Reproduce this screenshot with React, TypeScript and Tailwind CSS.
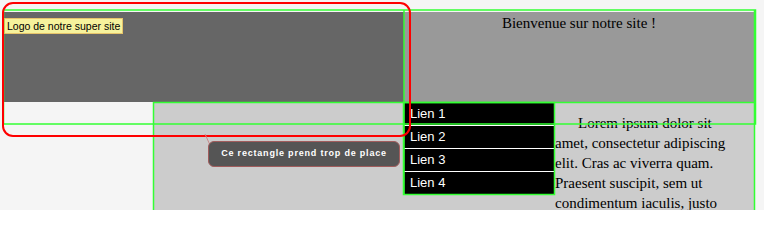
import React from "react";

const serif = { fontFamily: '"Liberation Serif", "Times New Roman", serif' };

export default function App() {
  return (
    <div className="relative w-[764px] h-[210px] overflow-hidden bg-[#f5f5f5]">
      {/* page */}
      <div className="pt-[12px] pl-[4px]">
        <div className="w-[750px]">
          {/* header */}
          <div className="flex h-[90px]">
            <div className="w-[400px] bg-[#666666] relative">
              <div className="inline-block h-[16px] px-[2px] bg-[#f6f29c] border border-[#e6c46a] text-black text-[10.5px] leading-[14px] font-['Liberation_Sans',Arial,sans-serif] whitespace-nowrap">
                Logo de notre super site
              </div>
            </div>
            <div
              className="w-[350px] bg-[#999999] text-center text-black text-[15px] leading-[19px] pt-[2px]"
              style={serif}
            >
              Bienvenue sur notre site !
            </div>
          </div>
          {/* body */}
          <div className="flex h-[120px]">
            <div className="w-[149px]" />
            <div className="w-[601px] bg-[#cccccc] flex">
              <div className="w-[251px]" />
              <ul className="w-[150px] pt-[1px] self-start font-['Liberation_Sans',Arial,sans-serif] text-white text-[13px]">
                <li className="h-[23px] leading-[22px] pl-[6px] bg-black border-b border-white">Lien 1</li>
                <li className="h-[23px] leading-[22px] pl-[6px] bg-black border-b border-white">Lien 2</li>
                <li className="h-[23px] leading-[22px] pl-[6px] bg-black border-b border-white">Lien 3</li>
                <li className="h-[22px] leading-[22px] pl-[6px] bg-black">Lien 4</li>
              </ul>
              <div
                className="w-[200px] pl-[1px] pt-[11px] text-black text-[15px] leading-[20px] whitespace-nowrap"
                style={serif}
              >
                <p className="indent-[23px]">
                  Lorem ipsum dolor sit
                  <br />
                  amet, consectetur adipiscing
                  <br />
                  elit. Cras ac viverra quam.
                  <br />
                  Praesent suscipit, sem ut
                  <br />
                  condimentum iaculis, justo
                </p>
              </div>
            </div>
          </div>
        </div>
      </div>

      {/* annotation overlay */}
      <svg
        className="absolute left-0 top-0 pointer-events-none"
        width="764"
        height="210"
        viewBox="0 0 764 210"
      >
        <g stroke="#33ff33" strokeWidth="1.5" fill="none">
          <rect x="3.5" y="10" width="752" height="114" />
          <line x1="404" y1="10" x2="404" y2="195" />
          <rect x="403.5" y="102.5" width="151" height="92" />
          <line x1="153" y1="102.5" x2="755" y2="102.5" />
          <line x1="153.5" y1="102" x2="153.5" y2="210" />
          <line x1="754.5" y1="10" x2="754.5" y2="210" />
        </g>
        <rect
          x="3"
          y="3"
          width="407"
          height="133"
          rx="10"
          ry="10"
          fill="none"
          stroke="#ff0000"
          strokeWidth="2"
        />
        <line x1="205" y1="134" x2="210" y2="145" stroke="#c98a8a" strokeWidth="1" />
      </svg>

      {/* callout */}
      <div className="absolute left-[208px] top-[141px] w-[192px] h-[26px] rounded-[6px] bg-[#555555] border border-[#a05c5c] flex items-center justify-center text-white font-bold text-[9px] tracking-[0.8px] font-['Liberation_Sans',Arial,sans-serif] whitespace-nowrap">
        Ce rectangle prend trop de place
      </div>
    </div>
  );
}
